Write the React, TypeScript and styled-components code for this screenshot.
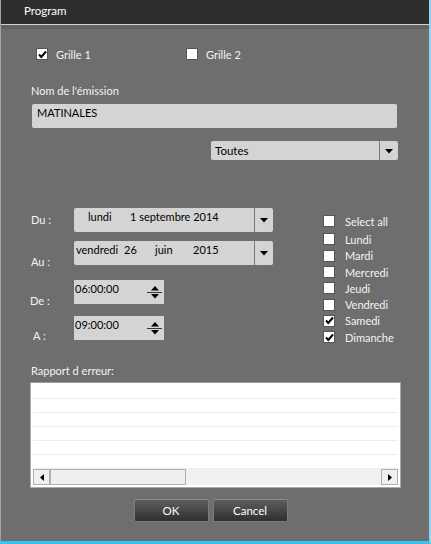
import React from 'react';
import styled, { createGlobalStyle } from 'styled-components';

const GlobalStyle = createGlobalStyle`
  html, body {
    margin: 0;
    padding: 0;
    background: #6e6e6e;
  }
  * {
    box-sizing: border-box;
  }
`;

const days = [
  { label: 'Select all', checked: false },
  { label: 'Lundi', checked: false },
  { label: 'Mardi', checked: false },
  { label: 'Mercredi', checked: false },
  { label: 'Jeudi', checked: false },
  { label: 'Vendredi', checked: false },
  { label: 'Samedi', checked: true },
  { label: 'Dimanche', checked: true },
];

const Check = ({ checked }: { checked?: boolean }) => (
  <Box>
    {checked && (
      <svg width="9" height="9" viewBox="0 0 9 9">
        <path d="M1 4.5 L3.3 7 L8 1.5" stroke="#000" strokeWidth="2" fill="none" />
      </svg>
    )}
  </Box>
);

const DownArrow = () => (
  <svg width="8" height="5" viewBox="0 0 8 5">
    <path d="M0 0 H8 L4 4.5 Z" fill="#000" />
  </svg>
);

const UpArrow = () => (
  <svg width="8" height="5" viewBox="0 0 8 5">
    <path d="M0 4.5 H8 L4 0 Z" fill="#000" />
  </svg>
);

const App = () => {
  return (
    <Window>
      <GlobalStyle />
      <TitleBar>Program</TitleBar>
      <Strip />
      <Body>
        <GrilleRow>
          <CheckItem width={150}>
            <Check checked />
            <span>Grille 1</span>
          </CheckItem>
          <CheckItem>
            <Check />
            <span>Grille 2</span>
          </CheckItem>
        </GrilleRow>

        <Label top={23}>Nom de l'émission</Label>
        <TextInput>MATINALES</TextInput>

        <ComboRow>
          <Combo>
            <ComboText>Toutes</ComboText>
            <ArrowBtn>
              <DownArrow />
            </ArrowBtn>
          </Combo>
        </ComboRow>

        <DateSection>
          <LeftCol>
            <FieldRow>
              <FieldLabel offset={0}>Du :</FieldLabel>
              <DatePicker>
                <DateText>
                  <Part w={42} pad={14}>lundi</Part>
                  <Part>1 septembre 2014</Part>
                </DateText>
                <ArrowBtn w={19}>
                  <DownArrow />
                </ArrowBtn>
              </DatePicker>
            </FieldRow>
            <FieldRow top={9}>
              <FieldLabel offset={9}>Au :</FieldLabel>
              <DatePicker>
                <DateText top>
                  <Part w={48} pad={2}>vendredi</Part>
                  <Part w={31}>26</Part>
                  <Part w={38}>juin</Part>
                  <Part>2015</Part>
                </DateText>
                <ArrowBtn w={19}>
                  <DownArrow />
                </ArrowBtn>
              </DatePicker>
            </FieldRow>
            <FieldRow top={15}>
              <FieldLabel offset={9} x={-1}>De :</FieldLabel>
              <Spinner>
                <SpinText>06:00:00</SpinText>
                <SpinButtons>
                  <UpArrow />
                  <SpinLine />
                  <DownArrow />
                </SpinButtons>
              </Spinner>
            </FieldRow>
            <FieldRow top={12}>
              <FieldLabel offset={8} x={2}>A :</FieldLabel>
              <Spinner>
                <SpinText>09:00:00</SpinText>
                <SpinButtons>
                  <UpArrow />
                  <SpinLine />
                  <DownArrow />
                </SpinButtons>
              </Spinner>
            </FieldRow>
          </LeftCol>
          <DayList>
            {days.map((d, i) => (
              <DayItem key={d.label} first={i === 0}>
                <Check checked={d.checked} />
                <span>{d.label}</span>
              </DayItem>
            ))}
          </DayList>
        </DateSection>

        <Label top={18}>Rapport d erreur:</Label>
        <Grid>
          <GridRows>
            {[0, 1, 2, 3, 4, 5].map((i) => (
              <GridRow key={i} />
            ))}
          </GridRows>
          <ScrollBar>
            <ScrollBtn>
              <svg width="4" height="7" viewBox="0 0 4 7">
                <path d="M4 0 V7 L0 3.5 Z" fill="#000" />
              </svg>
            </ScrollBtn>
            <Thumb />
            <Track />
            <ScrollBtn>
              <svg width="4" height="7" viewBox="0 0 4 7">
                <path d="M0 0 V7 L4 3.5 Z" fill="#000" />
              </svg>
            </ScrollBtn>
          </ScrollBar>
        </Grid>

        <Buttons>
          <Button>OK</Button>
          <Button>Cancel</Button>
        </Buttons>
      </Body>
    </Window>
  );
};

export default App;

const Window = styled.div`
  width: 431px;
  height: 544px;
  background: #6e6e6e;
  border-left: 1px solid #9aa4aa;
  border-right: 2px solid #8fd6f0;
  border-bottom: 3px solid #35c4ee;
  font-family: Lato, 'Open Sans', sans-serif;
  font-size: 11px;
  color: #f4f4f4;
  display: flex;
  flex-direction: column;
  overflow: hidden;
`;

const TitleBar = styled.div`
  height: 25px;
  background: #2e2e2e;
  border-bottom: 1px solid #d2d2d2;
  padding-left: 23px;
  line-height: 22px;
  font-size: 11.5px;
  color: #ffffff;
`;

const Strip = styled.div`
  height: 4px;
  background: #626262;
`;

const Body = styled.div`
  flex: 1;
  padding: 0 30px 0 28px;
  display: flex;
  flex-direction: column;
`;

const GrilleRow = styled.div`
  margin-top: 19px;
  display: flex;
  padding-left: 7px;
`;

const CheckItem = styled.div<{ width?: number }>`
  display: flex;
  align-items: center;
  gap: 8px;
  width: ${(p) => (p.width ? `${p.width}px` : 'auto')};
  height: 12px;
`;

const Box = styled.div`
  width: 12px;
  height: 12px;
  background: #ffffff;
  border: 1px solid #565656;
  display: flex;
  align-items: center;
  justify-content: center;
  flex-shrink: 0;
`;

const Label = styled.div<{ top: number }>`
  margin-top: ${(p) => p.top}px;
  padding-left: 2px;
  height: 16px;
  line-height: 16px;
`;

const TextInput = styled.div`
  margin-top: 5px;
  margin-left: 3px;
  width: 365px;
  height: 24px;
  background: #d4d4d4;
  border-radius: 2px;
  color: #000;
  padding: 1px 0 0 5px;
  line-height: 16px;
`;

const ComboRow = styled.div`
  margin-top: 13px;
  padding-left: 182px;
`;

const Combo = styled.div`
  width: 187px;
  height: 19px;
  background: #d4d4d4;
  border-radius: 2px;
  display: flex;
  color: #000;
`;

const ComboText = styled.div`
  flex: 1;
  padding-left: 4px;
  line-height: 19px;
  font-size: 11.5px;
`;

const ArrowBtn = styled.div<{ w?: number }>`
  width: ${(p) => p.w || 19}px;
  border-left: 1px solid #7a7a7a;
  display: flex;
  align-items: center;
  justify-content: center;
  padding-top: 1px;
`;

const DateSection = styled.div`
  margin-top: 48px;
  display: flex;
`;

const LeftCol = styled.div`
  display: flex;
  flex-direction: column;
  width: 294px;
`;

const FieldRow = styled.div<{ top?: number }>`
  display: flex;
  height: 24px;
  margin-top: ${(p) => p.top || 0}px;
`;

const FieldLabel = styled.div<{ offset: number; x?: number }>`
  width: 45px;
  padding-top: ${(p) => p.offset + 4}px;
  padding-left: ${(p) => 2 + (p.x || 0)}px;
  line-height: 16px;
  white-space: nowrap;
`;

const DatePicker = styled.div`
  width: 199px;
  height: 24px;
  background: #d4d4d4;
  border-radius: 2px;
  display: flex;
  color: #000;
`;

const DateText = styled.div<{ top?: boolean }>`
  flex: 1;
  display: flex;
  align-items: ${(p) => (p.top ? 'flex-start' : 'center')};
  padding-top: ${(p) => (p.top ? '1px' : '0')};
  padding-bottom: ${(p) => (p.top ? '0' : '6px')};
  line-height: 16px;
`;

const Part = styled.span<{ w?: number; pad?: number }>`
  width: ${(p) => (p.w ? `${p.w}px` : 'auto')};
  margin-left: ${(p) => p.pad || 0}px;
  white-space: nowrap;
`;

const Spinner = styled.div`
  width: 90px;
  height: 24px;
  background: #d4d4d4;
  display: flex;
  color: #000;
`;

const SpinText = styled.div`
  flex: 1;
  padding: 1px 0 0 1px;
  line-height: 16px;
`;

const SpinButtons = styled.div`
  width: 17px;
  display: flex;
  flex-direction: column;
  align-items: center;
  justify-content: center;
  gap: 1px;
  padding-right: 2px;
`;

const SpinLine = styled.div`
  width: 15px;
  height: 1px;
  background: #333;
`;

const DayList = styled.div`
  display: flex;
  flex-direction: column;
  padding-top: 5px;
`;

const DayItem = styled.div<{ first?: boolean }>`
  display: flex;
  align-items: center;
  gap: 10px;
  height: 16.3px;
  margin-bottom: ${(p) => (p.first ? '2px' : '0')};
`;

const Grid = styled.div`
  margin-top: 3px;
  margin-left: 1px;
  width: 371px;
  height: 106px;
  background: #ffffff;
  border: 1px solid #a9a9a9;
  border-top-color: #9b9b9b;
  display: flex;
  flex-direction: column;
  padding: 2px;
`;

const GridRows = styled.div`
  flex: 1;
  display: flex;
  flex-direction: column;
`;

const GridRow = styled.div`
  height: 14px;
  border-bottom: 1px solid #ececec;
`;

const ScrollBar = styled.div`
  height: 17px;
  display: flex;
  background: #f0f0f0;
`;

const ScrollBtn = styled.div`
  width: 17px;
  border: 1px solid #b0b0b0;
  background: #f0f0f0;
  display: flex;
  align-items: center;
  justify-content: center;
`;

const Thumb = styled.div`
  width: 136px;
  border: 1px solid #b0b0b0;
  background: #efefef;
`;

const Track = styled.div`
  flex: 1;
  background: repeating-conic-gradient(#ebebeb 0 25%, #f8f8f8 0 50%) 0 0 / 2px 2px;
`;

const Buttons = styled.div`
  margin-top: 11px;
  display: flex;
  justify-content: center;
  gap: 4px;
  padding-right: 7px;
`;

const Button = styled.div`
  width: 75px;
  height: 23px;
  border: 1px solid #7c7c7c;
  border-top-color: #8c8c8c;
  border-radius: 2px;
  background: linear-gradient(#5e5e5e, #2f2f2f);
  color: #ffffff;
  font-size: 11.5px;
  display: flex;
  align-items: center;
  justify-content: center;
`;
